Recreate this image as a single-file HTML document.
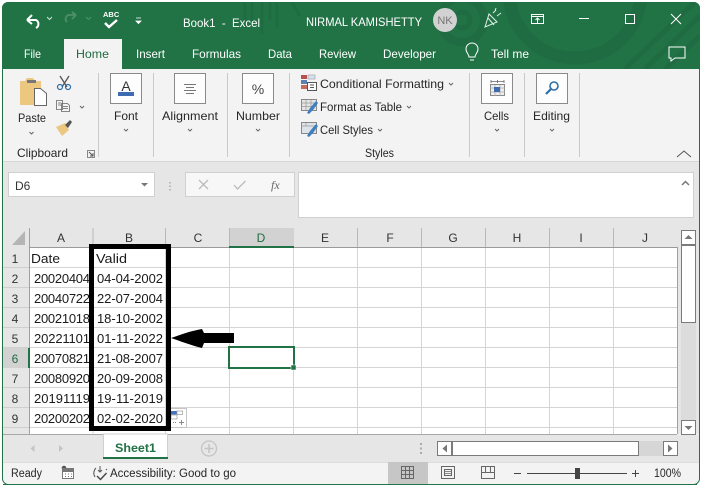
<!DOCTYPE html>
<html><head><meta charset="utf-8"><style>
html,body{margin:0;padding:0;background:#fff;width:704px;height:486px;overflow:hidden}
svg{display:block;position:absolute;left:0;top:0}
text{font-family:"Liberation Sans",sans-serif;font-size:12px;fill:#262626}
.w{fill:#fff}
.c{font-size:13px;fill:#1a1a1a}
.h{font-size:12px;fill:#333;text-anchor:middle}
.g{stroke:#d4d4d4;stroke-width:1;fill:none}
.box{fill:#fdfdfd;stroke:#8a8a8a;stroke-width:1}
.chev{fill:none;stroke:#666;stroke-width:1}
</style></head><body>
<svg width="704" height="486" viewBox="0 0 704 486" xmlns="http://www.w3.org/2000/svg">
<!-- window -->
<rect x="2.500" y="2.500" width="697" height="482" rx="6" fill="#f3f3f3" stroke="#217346"/>
<path d="M2 69V8a6 6 0 0 1 6-6H694a6 6 0 0 1 6 6V69Z" fill="#217346"/>
<!-- title decoration -->
<svg x="2" y="2" width="698" height="67" viewBox="2 2 698 67">
<g fill="none" stroke="#1f6c42">
<path d="M245 2v26M252 2v20M262 2v32M270 2v18M277 2v26M292 2l8 14" stroke-width="3"/>
<circle cx="462" cy="20" r="22" stroke-width="8"/>
<circle cx="462" cy="20" r="8" stroke-width="5"/>
<circle cx="575" cy="-8" r="66" stroke-width="13"/>
<path d="M625 69L695 2M645 69L700 16M665 69L700 36" stroke-width="5"/>
</g>
</svg>
<!-- home tab -->
<rect x="64" y="39" width="58" height="31" fill="#f3f3f3"/>
<!-- QAT -->
<path d="M27 20l5-5M27 20l5 4M27 20h9a4.500 4.500 0 0 1 0 8" fill="none" stroke="#fff" stroke-width="2"/>
<path d="M47 17l2.500 2.500L52 17" fill="none" stroke="#cfe3d7" stroke-width="1"/>
<path d="M76 15l-4-3M76 15l-4 4M76 15h-6a4 4 0 0 0-3 7" fill="none" stroke="#4c9069" stroke-width="1.800"/>
<path d="M86 17l2.500 2.500L91 17" fill="none" stroke="#4c9069"/>
<text x="103" y="17" style="font-size:7.500px;font-weight:bold" class="w">ABC</text>
<path d="M105 23l4 4 8-7" fill="none" stroke="#fff" stroke-width="2.400"/>
<path d="M136 18h5M136 21h5l-2.500 2.500z" fill="#fff" stroke="#fff" stroke-width=".8"/>
<text x="183" y="27" class="w" textLength="77" lengthAdjust="spacingAndGlyphs" xml:space="preserve">Book1  -  Excel</text>
<text x="306" y="26" class="w" textLength="116" lengthAdjust="spacingAndGlyphs">NIRMAL KAMISHETTY</text>
<circle cx="445" cy="20" r="12" fill="#d2d2d2"/>
<text x="445" y="24" style="font-size:11px;fill:#777;text-anchor:middle">NK</text>
<!-- celebration icon -->
<path d="M485 27l4-13 8 8zM488 18l6 7M493 13l3-3M497 16l4-3M495 11l1-3" fill="none" stroke="#dfeee5" stroke-width="1"/>
<!-- ribbon display icon -->
<rect x="531.500" y="14.500" width="12" height="9" fill="none" stroke="#fff"/>
<path d="M531 16.500h13M537.500 23v-5M535.500 20l2-2 2 2" fill="none" stroke="#fff"/>
<path d="M579 18.500h10" stroke="#fff"/>
<rect x="625.500" y="14.500" width="9" height="9" fill="none" stroke="#fff"/>
<path d="M671 14l10 10M681 14l-10 10" stroke="#fff" fill="none"/>
<!-- tabs -->
<text x="24" y="58" class="w" textLength="17" lengthAdjust="spacingAndGlyphs">File</text>
<text x="76" y="58" style="fill:#1f6b41" textLength="33" lengthAdjust="spacingAndGlyphs">Home</text>
<text x="136" y="58" class="w" textLength="29" lengthAdjust="spacingAndGlyphs">Insert</text>
<text x="192" y="58" class="w" textLength="49" lengthAdjust="spacingAndGlyphs">Formulas</text>
<text x="268" y="58" class="w" textLength="24" lengthAdjust="spacingAndGlyphs">Data</text>
<text x="319" y="58" class="w" textLength="37" lengthAdjust="spacingAndGlyphs">Review</text>
<text x="383" y="58" class="w" textLength="53" lengthAdjust="spacingAndGlyphs">Developer</text>
<path d="M469 57c0-3-3-4-3-8a6 6 0 0 1 12 0c0 4-3 5-3 8zM470 60h4" fill="none" stroke="#fff"/>
<text x="491" y="58" class="w" textLength="38" lengthAdjust="spacingAndGlyphs">Tell me</text>
<path d="M669 47h16v11h-10l-4 3v-3h-2z" fill="none" stroke="#fff"/>
<!-- ribbon separators -->
<path d="M98.500 73v84M153.500 73v84M227.500 73v84M289.500 73v84M469.500 73v84M524.500 73v84M579.500 73v84" stroke="#c9c9c9"/>
<path d="M3 161.500h696" stroke="#d6d6d6"/>
<!-- paste -->
<path d="M20 81h5l2-3h6l2 3h6v12H34v12H20z" fill="#ebc77f"/>
<path d="M27 80h9v3h-9z" fill="#777"/>
<path d="M34.500 88.500h6l6 5v12h-12z" fill="#fff" stroke="#666"/>
<text x="18" y="122" textLength="28" lengthAdjust="spacingAndGlyphs">Paste</text>
<path d="M29.500 132l2 2 2-2" class="chev"/>
<!-- scissors -->
<path d="M60 76l7 11M69 76l-7 11" stroke="#555" stroke-width="1.300" fill="none"/>
<circle cx="60" cy="87" r="2.500" fill="none" stroke="#2f6ea5" stroke-width="1.200"/>
<circle cx="68" cy="87" r="2.500" fill="none" stroke="#2f6ea5" stroke-width="1.200"/>
<!-- copy -->
<path d="M56.500 100.500h6v9h-6zM61.500 103.500h6l2 2v6h-8z" fill="#f3f3f3" stroke="#666" stroke-width=".8"/>
<path d="M63 106.500h5M63 108.500h5M58 103h3M58 105h3" stroke="#666" stroke-width=".8"/>
<path d="M80 106l2 2 2-2" class="chev"/>
<!-- format painter -->
<path d="M56 127l9-4 4 7-7 6z" fill="#ebc77f"/>
<path d="M65 125l5-5 2 2-4 6z" fill="#555"/>
<text x="17" y="157" textLength="51" lengthAdjust="spacingAndGlyphs">Clipboard</text>
<path d="M87.500 150.500h7v7h-7z" fill="none" stroke="#888"/><path d="M89 152l4 4M93 153v3h-3" fill="none" stroke="#555"/>
<!-- font -->
<rect x="110.500" y="73.500" width="31" height="30" class="box"/>
<text x="126" y="91" style="font-size:14px;text-anchor:middle;fill:#333">A</text>
<rect x="118" y="92" width="16" height="4" fill="#3f6cb0"/>
<text x="114" y="120" textLength="24" lengthAdjust="spacingAndGlyphs">Font</text>
<path d="M124 129l2 2 2-2" class="chev"/>
<!-- alignment -->
<rect x="174.500" y="73.500" width="31" height="30" class="box"/>
<path d="M184 84.500h12M186 87.500h8M184 90.500h12M186 93.500h8" stroke="#777"/>
<text x="162" y="120" textLength="56" lengthAdjust="spacingAndGlyphs">Alignment</text>
<path d="M188 129l2 2 2-2" class="chev"/>
<!-- number -->
<rect x="242.500" y="73.500" width="31" height="30" class="box"/>
<text x="258" y="94" style="font-size:14px;text-anchor:middle;fill:#444">%</text>
<text x="236" y="120" textLength="44" lengthAdjust="spacingAndGlyphs">Number</text>
<path d="M256 129l2 2 2-2" class="chev"/>
<!-- styles -->
<rect x="301" y="75" width="6" height="4" fill="#b5524a"/><rect x="308" y="75" width="7" height="4" fill="#d9e2ee" stroke="#889" stroke-width=".5"/>
<rect x="301" y="80" width="6" height="4" fill="#5f7fb0"/><rect x="301" y="85" width="6" height="4" fill="#c96b5c"/>
<rect x="307.500" y="82.500" width="9" height="8" fill="#fff" stroke="#555"/><path d="M310 85h4M310 87.500h4" stroke="#555"/>
<text x="320" y="88" textLength="124" lengthAdjust="spacingAndGlyphs">Conditional Formatting</text>
<path d="M449 83l2 2 2-2" class="chev"/>
<rect x="301.500" y="99.500" width="15" height="11" fill="#e4e4e4" stroke="#888"/><path d="M301 103h16M306 100v10M311 100v10M301 106.500h16" stroke="#999" stroke-width=".7"/><path d="M307 113l3-5 6-7 2 2-5 7-4 4z" fill="#3f7fc0"/>
<text x="320" y="111" textLength="82" lengthAdjust="spacingAndGlyphs">Format as Table</text>
<path d="M407 106l2 2 2-2" class="chev"/>
<rect x="301.500" y="122.500" width="15" height="11" fill="#dde3ea" stroke="#888"/><path d="M301 126h16M306 123v3" stroke="#999" stroke-width=".7"/><path d="M307 136l3-5 6-7 2 2-5 7-4 4z" fill="#3f7fc0"/>
<text x="320" y="134" textLength="53" lengthAdjust="spacingAndGlyphs">Cell Styles</text>
<path d="M378 129l2 2 2-2" class="chev"/>
<text x="365" y="157" textLength="29" lengthAdjust="spacingAndGlyphs">Styles</text>
<!-- cells -->
<rect x="481.500" y="73.500" width="31" height="30" class="box"/>
<path d="M491 81.500h13M491 80v3M504 80v3M497.500 80v3" stroke="#666" stroke-width=".8"/>
<rect x="490.500" y="84.500" width="14" height="11" fill="#eee" stroke="#888"/>
<path d="M490 88h15M490 92h15M495 85v11M500 85v11" stroke="#aaa" stroke-width=".7"/>
<rect x="494" y="87" width="6" height="5" fill="#3f6cb0"/>
<text x="484" y="120" textLength="25" lengthAdjust="spacingAndGlyphs">Cells</text>
<path d="M495 129l2 2 2-2" class="chev"/>
<!-- editing -->
<rect x="536.500" y="73.500" width="31" height="30" class="box"/>
<circle cx="554" cy="86" r="4" fill="none" stroke="#2f6ea5" stroke-width="1.600"/>
<path d="M551 89l-5 5" stroke="#2f6ea5" stroke-width="2.200"/>
<text x="533" y="120" textLength="37" lengthAdjust="spacingAndGlyphs">Editing</text>
<path d="M550 129l2 2 2-2" class="chev"/>
<path d="M677 157l7-6 7 6" fill="none" stroke="#555"/>
<!-- formula area -->
<rect x="3" y="162" width="696" height="272" fill="#e6e6e6"/>
<rect x="8.500" y="172.500" width="146" height="24" fill="#fff" stroke="#d0d0d0"/>
<text x="15" y="190" style="font-size:12px;fill:#333">D6</text>
<path d="M141 183h7l-3.500 3.500z" fill="#777"/>
<path d="M170 182v1.500M170 185.500v1.500M170 189v1.500" stroke="#aaa" stroke-width="1.500"/>
<rect x="185.500" y="172.500" width="109" height="24" fill="#f7f7f7" stroke="#d0d0d0"/>
<path d="M199 180l9 9M208 180l-9 9" stroke="#bbb" stroke-width="1.300" fill="none"/>
<path d="M234 185l3.500 4 8-8" stroke="#bbb" stroke-width="1.300" fill="none"/>
<text x="271" y="189" style="font-family:'Liberation Serif',serif;font-style:italic;font-size:12px;fill:#666">fx</text>
<rect x="298.500" y="172.500" width="395" height="45" fill="#fff" stroke="#d0d0d0"/>
<path d="M682 185l3.500-3.500 3.500 3.500" fill="none" stroke="#777" stroke-width="1.500"/>
<!-- grid bg -->
<rect x="29" y="247" width="648" height="187" fill="#fff"/>
<rect x="3" y="247" width="26" height="187" fill="#e6e6e6"/>
<g class="g">
<path d="M29 267.500H677M29 287.500H677M29 307.500H677M29 327.500H677M29 347.500H677M29 367.500H677M29 387.500H677M29 407.500H677M29 427.500H677"/>
<path d="M93 247V434M165.500 247V434M229.500 247V434M293.500 247V434M357.500 247V434M421.500 247V434M485.500 247V434M549.500 247V434M613.500 247V434"/>
</g>
<path d="M3 267.500H29M3 287.500H29M3 307.500H29M3 327.500H29M3 347.500H29M3 367.500H29M3 387.500H29M3 407.500H29M3 427.500H29" stroke="#cfcfcf"/>
<path d="M93 228V247M165.500 228V247M229.500 228V247M293.500 228V247M357.500 228V247M421.500 228V247M485.500 228V247M549.500 228V247M613.500 228V247" stroke="#b8b8b8"/>
<path d="M29.500 228V434M677.500 247V434" stroke="#a0a0a0"/>
<path d="M29 247.500H677" stroke="#9a9a9a"/>
<path d="M3 434.500H677" stroke="#a8a8a8"/>
<path d="M25 231v14H12z" fill="#b5b5b5"/>
<!-- selected headers -->
<rect x="230" y="228" width="64" height="19" fill="#d2d2d2"/>
<rect x="229" y="246" width="65" height="2" fill="#217346"/>
<rect x="3" y="348" width="25" height="20" fill="#d2d2d2"/>
<rect x="28" y="348" width="2" height="20" fill="#217346"/>
<!-- col letters -->
<text x="61" y="242" class="h">A</text><text x="129" y="242" class="h">B</text><text x="198" y="242" class="h">C</text><text x="261" y="242" class="h" style="fill:#1f6b41">D</text><text x="325" y="242" class="h">E</text><text x="390" y="242" class="h">F</text><text x="453" y="242" class="h">G</text><text x="517" y="242" class="h">H</text><text x="581" y="242" class="h">I</text><text x="645" y="242" class="h">J</text>
<!-- row nums -->
<text x="15" y="263" class="h">1</text><text x="15" y="283" class="h">2</text><text x="15" y="303" class="h">3</text><text x="15" y="323" class="h">4</text><text x="15" y="343" class="h">5</text><text x="15" y="363" class="h" style="fill:#1f6b41">6</text><text x="15" y="383" class="h">7</text><text x="15" y="403" class="h">8</text><text x="15" y="423" class="h">9</text>
<!-- data -->
<text x="31" y="263" class="c" textLength="29" lengthAdjust="spacingAndGlyphs">Date</text>
<text x="96" y="263" class="c" textLength="31" lengthAdjust="spacingAndGlyphs">Valid</text>
<text x="34" y="283" class="c" textLength="56">20020404</text>
<text x="34" y="303" class="c" textLength="56">20040722</text>
<text x="34" y="323" class="c" textLength="56">20021018</text>
<text x="34" y="343" class="c" textLength="56">20221101</text>
<text x="34" y="363" class="c" textLength="56">20070821</text>
<text x="34" y="383" class="c" textLength="56">20080920</text>
<text x="34" y="403" class="c" textLength="56">20191119</text>
<text x="34" y="423" class="c" textLength="56">20200202</text>
<text x="97" y="283" class="c" textLength="66">04-04-2002</text>
<text x="97" y="303" class="c" textLength="66">22-07-2004</text>
<text x="97" y="323" class="c" textLength="66">18-10-2002</text>
<text x="97" y="343" class="c" textLength="66">01-11-2022</text>
<text x="97" y="363" class="c" textLength="66">21-08-2007</text>
<text x="97" y="383" class="c" textLength="66">20-09-2008</text>
<text x="97" y="403" class="c" textLength="66">19-11-2019</text>
<text x="97" y="423" class="c" textLength="66">02-02-2020</text>
<!-- flash fill icon -->
<rect x="170.500" y="408.500" width="16" height="19" fill="#fff" stroke="#c4c4c4"/>
<rect x="171" y="411" width="6" height="3.500" fill="#4472c4"/>
<rect x="177" y="411" width="5.500" height="3.500" fill="#fff" stroke="#999" stroke-width=".7"/>
<rect x="171" y="415" width="6" height="4" fill="#fff" stroke="#999" stroke-width=".7"/>
<path d="M173 422.500h4" stroke="#888" stroke-dasharray="1 1"/><path d="M179 422.500h5M181.500 420v5" stroke="#888"/>
<!-- black box -->
<rect x="91.500" y="246.500" width="77" height="182" fill="none" stroke="#000" stroke-width="5"/>
<!-- arrow -->
<path d="M171 338C180 335 190 331 202 329L204 333H234V343H204L202 348C190 345 180 341 171 338Z" fill="#000"/>
<!-- selection -->
<rect x="229" y="347" width="65" height="21" fill="none" stroke="#217346" stroke-width="2"/>
<rect x="291" y="365" width="5" height="5" fill="#217346" stroke="#fff" stroke-width=".5"/>
<!-- v scroll -->
<rect x="681" y="230" width="15" height="204" fill="#dcdcdc"/>
<rect x="681.500" y="230.500" width="14" height="14" fill="#fff" stroke="#7a7a7a"/>
<path d="M684.500 239l4-4 4 4z" fill="#777"/>
<rect x="681.500" y="245.500" width="14" height="77" fill="#fff" stroke="#7a7a7a"/>
<rect x="681.500" y="420.500" width="14" height="14" fill="#fff" stroke="#7a7a7a"/>
<path d="M684.500 426l4 4 4-4z" fill="#777"/>
<!-- sheet bar -->
<rect x="3" y="435" width="696" height="27" fill="#e6e6e6"/>
<path d="M3 462.500H699" stroke="#dcdcdc"/>
<path d="M34.500 445l-4 3.500 4 3.500zM59 445l4 3.500-4 3.500z" fill="#c4c4c4"/>
<rect x="103.500" y="434" width="64" height="24" fill="#fff" stroke="#d0d0d0"/>
<rect x="103" y="457" width="65" height="2" fill="#217346"/>
<text x="115" y="452" style="font-weight:bold;font-size:12px;fill:#217346" textLength="41" lengthAdjust="spacingAndGlyphs">Sheet1</text>
<circle cx="209" cy="448.500" r="7.500" fill="none" stroke="#c4c4c4" stroke-width="1.300"/>
<path d="M204.500 448.500h9M209 444v9" stroke="#c4c4c4" stroke-width="1.500"/>
<path d="M421 443v2M421 447.500v2M421 452v2" stroke="#aaa" stroke-width="2"/>
<rect x="638" y="441" width="26" height="15" fill="#d6d6d6"/>
<rect x="437.500" y="441.500" width="14" height="14" fill="#fff" stroke="#7a7a7a"/>
<path d="M447 444.500l-4.500 4 4.500 4z" fill="#777"/>
<rect x="452.500" y="441.500" width="186" height="14" fill="#fff" stroke="#7a7a7a"/>
<rect x="663.500" y="441.500" width="14" height="14" fill="#fff" stroke="#7a7a7a"/>
<path d="M668 444.500l4.500 4-4.500 4z" fill="#777"/>
<!-- status bar -->
<text x="11" y="477" style="font-size:11.500px" textLength="31" lengthAdjust="spacingAndGlyphs">Ready</text>
<circle cx="64" cy="468" r="2.300" fill="#555"/>
<rect x="62" y="468" width="12" height="3" fill="#777"/>
<rect x="62.500" y="471.500" width="11" height="7" fill="#fff" stroke="#777"/>
<path d="M65 474h1M68 474h1M71 474h1M65 476.500h1M68 476.500h1M71 476.500h1" stroke="#777"/>
<path d="M96 468a7 7 0 0 0-1 9M100 466v6M98 470l2 2 2-2M106 469l1 1" fill="none" stroke="#555"/>
<path d="M97 476l3.500 3.500 6-6.500" fill="none" stroke="#444" stroke-width="1.400"/>
<text x="110" y="477" style="font-size:11.500px" textLength="126" lengthAdjust="spacingAndGlyphs">Accessibility: Good to go</text>
<rect x="388" y="462" width="40" height="22" fill="#c6c6c6"/>
<rect x="401.500" y="466.500" width="12" height="12" fill="none" stroke="#666"/>
<path d="M405.500 466v13M409.500 466v13M401 470.500h13M401 474.500h13" stroke="#666"/>
<rect x="441.500" y="466.500" width="13" height="12" fill="none" stroke="#666"/>
<rect x="444.500" y="469.500" width="7" height="6" fill="none" stroke="#666"/>
<path d="M445 471.500h6M445 473.500h6" stroke="#666" stroke-width=".7"/>
<rect x="481.500" y="466.500" width="13" height="12" fill="none" stroke="#666"/>
<path d="M481 472.500h14M485.500 466v6M490.500 466v6" stroke="#666" fill="none"/>
<path d="M514 473.500h7M527 473.500h100M632 473.500h7M635.500 470v7" stroke="#444" fill="none"/>
<rect x="575" y="468" width="5" height="11" fill="#444"/>
<text x="654" y="477" style="font-size:11.500px" textLength="27" lengthAdjust="spacingAndGlyphs">100%</text>
<path d="M3 484.500H697" stroke="#217346"/>
</svg>
</body></html>
